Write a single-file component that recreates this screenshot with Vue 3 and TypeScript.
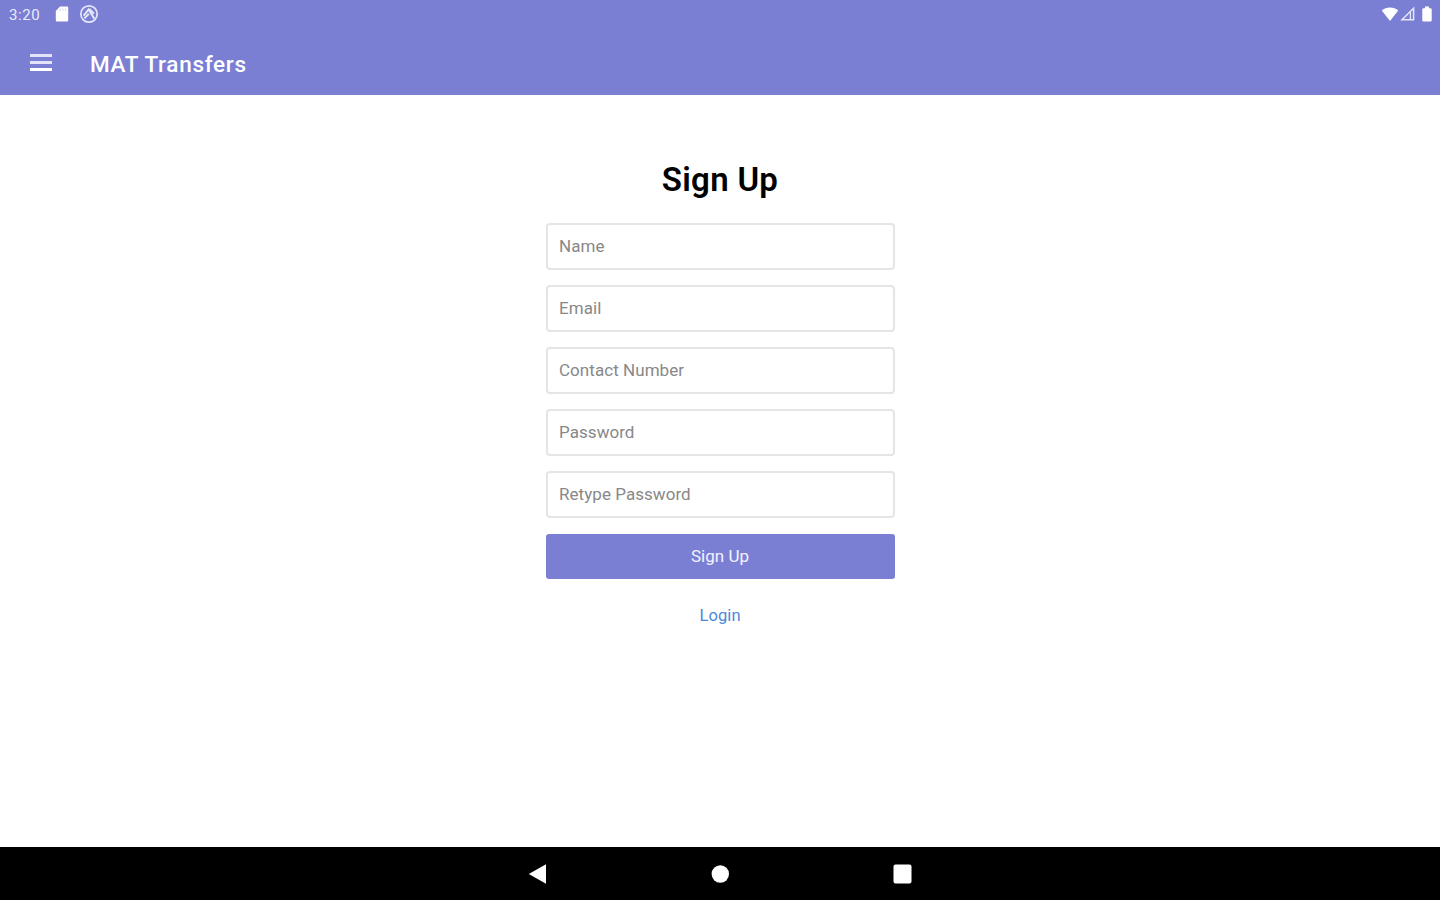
<template>
  <div class="screen">
    <header class="header">
      <!-- status bar -->
      <div class="statusbar">
        <div class="status-left">
          <span class="time">3:20</span>
          <svg class="sd" width="14" height="16" viewBox="0 0 14 16">
            <path d="M5 0.5h7a1.2 1.2 0 0 1 1.2 1.2v12.6a1.2 1.2 0 0 1-1.2 1.2H2a1.2 1.2 0 0 1-1.2-1.2V5z" fill="#fff" />
            <path d="M5.2 2.5v2.2M7.9 2.5v2.2M10.6 2.5v2.2" stroke="#d0d1f1" stroke-width="1" />
          </svg>
          <svg class="sync" width="20" height="20" viewBox="0 0 20 20" fill="none" stroke="#e6e6f9">
            <circle cx="10" cy="10" r="8.2" stroke-width="1.7" />
            <path d="M4.6 11.6 9.6 5.4l5.8 9.4M5.4 14.4l4.4-4.6M10.400 5l4.600 4.600" stroke-width="2" />
          </svg>
        </div>
        <div class="status-right">
          <svg width="18" height="16" viewBox="0 0 18 16">
            <path d="M9 15 .8 4.6C3 2.6 5.8 1.4 9 1.4s6 1.2 8.2 3.2z" fill="#fff" />
          </svg>
          <svg class="signal" width="16" height="16" viewBox="0 0 16 16" fill="none" stroke="#e6e6f9">
            <path d="M13.6 2.2v11.6H2z" stroke-width="1.5" />
            <path d="M10.4 6v7.5" stroke-width="1.3" />
          </svg>
          <svg class="battery" width="12" height="16" viewBox="0 0 12 16">
            <path d="M4 .5h4v1.7h1.5a1.2 1.2 0 0 1 1.2 1.2v10.9a1.2 1.2 0 0 1-1.2 1.2h-7a1.2 1.2 0 0 1-1.2-1.2V3.4a1.2 1.2 0 0 1 1.2-1.2H4z" fill="#fff" />
          </svg>
        </div>
      </div>
      <!-- app bar -->
      <div class="appbar">
        <button class="menubtn" aria-label="Menu">
          <span class="line"></span>
          <span class="line"></span>
          <span class="line"></span>
        </button>
        <span class="apptitle">MAT Transfers</span>
      </div>
    </header>

    <main class="content">
      <h1>Sign Up</h1>
      <form class="form" @submit.prevent>
        <input
          v-for="field in fields"
          :key="field.key"
          v-model="form[field.key]"
          :type="field.type"
          :placeholder="field.label"
        />
        <button class="submit" type="submit">Sign Up</button>
      </form>
      <a class="login" href="#">Login</a>
    </main>

    <!-- android navigation -->
    <nav class="navbar">
      <svg width="20" height="22" viewBox="0 0 20 22">
        <path d="M.8 11 18 1.2v19.6z" fill="#fff" />
      </svg>
      <svg width="20" height="22" viewBox="0 0 20 22">
        <circle cx="10.3" cy="11" r="8.7" fill="#fff" />
      </svg>
      <svg width="20" height="22" viewBox="0 0 20 22">
        <rect x="1.5" y="1.6" width="18" height="18.8" rx="2" fill="#fff" />
      </svg>
    </nav>
  </div>
</template>

<script setup lang="ts">
import { reactive } from 'vue'
type FieldKey = 'name' | 'email' | 'contact' | 'password' | 'retype'
type Field = {
  key: FieldKey
  label: string
  type: string
}
const fields: Field[] = [
  { key: 'name', label: 'Name', type: 'text' },
  { key: 'email', label: 'Email', type: 'email' },
  { key: 'contact', label: 'Contact Number', type: 'tel' },
  { key: 'password', label: 'Password', type: 'password' },
  { key: 'retype', label: 'Retype Password', type: 'password' },
]
const form = reactive<Record<FieldKey, string>>({
  name: '',
  email: '',
  contact: '',
  password: '',
  retype: '',
})
</script>

<style>
body {
  margin: 0;
  background-color: #fff;
}
</style>

<style scoped>
.screen {
  width: 100%;
  height: 100vh;
  display: flex;
  flex-direction: column;
  font-family: Roboto, 'Liberation Sans', sans-serif;
  overflow: hidden;
}
.header {
  height: 95px;
  flex-shrink: 0;
  background-color: #7b7fd4;
  color: white;
}
.statusbar {
  height: 28px;
  display: flex;
  justify-content: space-between;
  align-items: center;
  padding: 0 7px 0 9px;
}
.status-left,
.status-right {
  display: flex;
  align-items: center;
}
.time {
  width: 46px;
  padding-top: 1px;
  font-size: 15px;
  letter-spacing: 0.6px;
  color: #eaeafa;
}
.sync {
  margin-left: 10px;
}
.signal {
  margin-left: 1px;
}
.battery {
  margin-left: 5px;
}
.appbar {
  height: 67px;
  display: flex;
  align-items: center;
  padding-left: 30px;
}
.menubtn {
  width: 22px;
  height: 17px;
  margin-top: 2px;
  padding: 0;
  border: none;
  background-color: transparent;
  display: flex;
  flex-direction: column;
  justify-content: space-between;
}
.line {
  height: 3px;
  background-color: #e2e3f7;
}
.line:last-child {
  background-color: white;
}
.apptitle {
  margin: 5px 0 0 38px;
  font-size: 22.5px;
  font-weight: 500;
  letter-spacing: 0.7px;
}
.content {
  flex: 1;
  display: flex;
  flex-direction: column;
  align-items: center;
}
h1 {
  margin: 65px 0 23px;
  font-size: 33px;
  line-height: 40px;
  font-weight: 600;
  letter-spacing: 0.3px;
  color: #000;
}
.form {
  width: 349px;
  display: flex;
  flex-direction: column;
  gap: 15px;
}
.form > input {
  box-sizing: border-box;
  width: 100%;
  height: 47px;
  padding: 0 11.5px 2px;
  border: 2px solid #e5e5e5;
  border-radius: 4px;
  font-family: inherit;
  font-size: 17px;
  letter-spacing: 0.05px;
  outline: none;
}
.form > input::placeholder {
  color: #888;
  opacity: 1;
}
.submit {
  height: 45px;
  margin-top: 1px;
  padding: 0 0 2px;
  border: none;
  border-radius: 3px;
  background-color: #7b7fd4;
  color: #f2f2fc;
  font-family: inherit;
  font-size: 17px;
}
.login {
  margin-top: 26px;
  font-size: 16.5px;
  line-height: 22px;
  letter-spacing: 0.1px;
  color: #4a88dc;
  text-decoration: none;
}
.navbar {
  height: 53px;
  flex-shrink: 0;
  background-color: #000;
  display: flex;
  justify-content: center;
  align-items: center;
  gap: 162px;
}
</style>
